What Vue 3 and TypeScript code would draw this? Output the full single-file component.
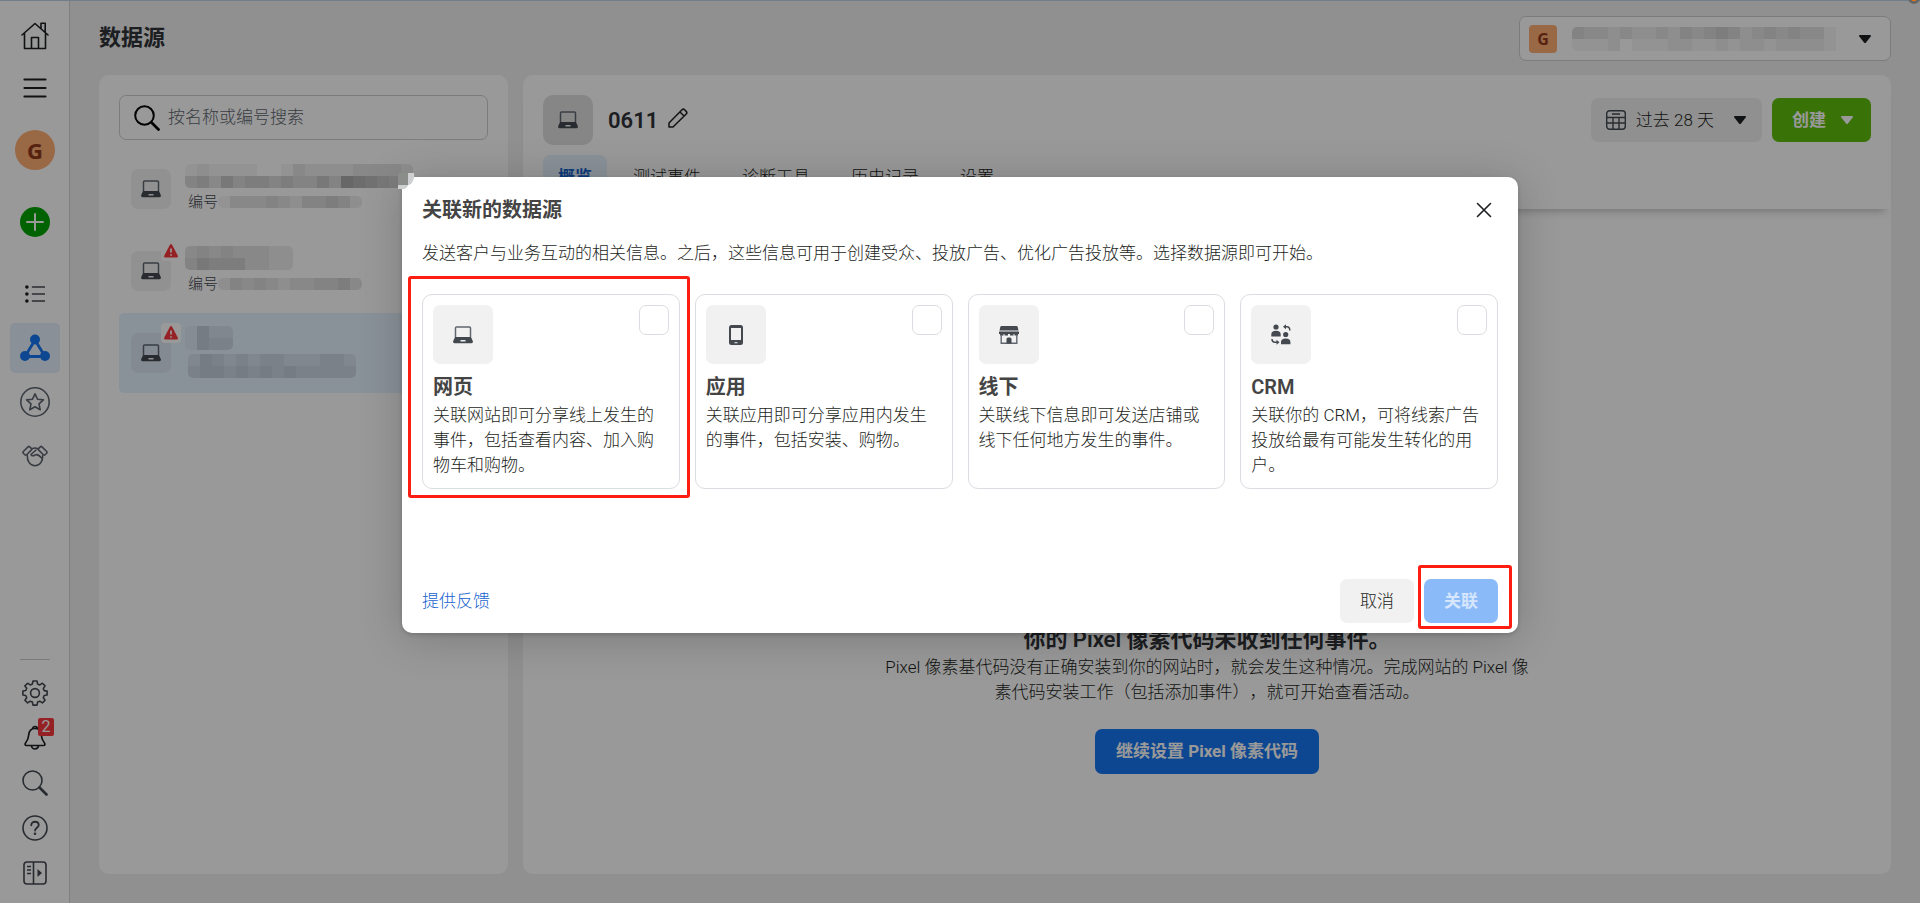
<script setup lang="ts">
import { ref } from 'vue'

interface Source { name: string[]; id: string[]; label: boolean; warn: boolean; active: boolean }
interface Card { key: string; title: string; text: string; icon: string; marked: boolean }

const sources: Source[] = [
  { name: ['1211110013222233332', '4536455454464987652'], id: ['133343244542'], label: true, warn: false, active: false },
  { name: ['343433322', '465553322'], id: ['243432334453'], label: true, warn: true, active: false },
  { name: ['1422', '1433'], id: ['24323233222332', '34434343433333'], label: false, warn: true, active: true },
]
const accountMask = ['4332322324345423434331', '1112011122112122122221']

const cards: Card[] = [
  { key: 'web', title: '网页', text: '关联网站即可分享线上发生的事件，包括查看内容、加入购物车和购物。', icon: 'laptop', marked: true },
  { key: 'app', title: '应用', text: '关联应用即可分享应用内发生的事件，包括安装、购物。', icon: 'phone', marked: false },
  { key: 'offline', title: '线下', text: '关联线下信息即可发送店铺或线下任何地方发生的事件。', icon: 'store', marked: false },
  { key: 'crm', title: 'CRM', text: '关联你的 CRM，可将线索广告投放给最有可能发生转化的用户。', icon: 'crm', marked: false },
]
const tabs = ['概览', '测试事件', '诊断工具', '历史记录', '设置']
const picked = ref<string[]>([])
const query = ref('')

const shade = (level: string) => ({ backgroundColor: `rgba(0, 0, 0, ${Number(level) * 0.036})` })
</script>

<template>
  <div class="app">
    <nav class="rail">
      <a href="#" class="rail-item" aria-label="主页">
        <svg width="28" height="28" viewBox="0 0 28 28" fill="none" stroke="#1c1e21" stroke-width="1.6" stroke-linejoin="round" stroke-linecap="round"><path d="M1 13 14 1.5 27 13M3.500 11v15.500h21V11M20 6V1.200h4.200V10M10.500 26.500V15.500h7v11" /></svg>
      </a>
      <button class="rail-item gap-2" aria-label="菜单">
        <svg width="24" height="20" viewBox="0 0 24 20" stroke="#1c1e21" stroke-width="2.200" stroke-linecap="round"><path d="M1.500 1.500h21M1.500 10h21M1.500 18.500h21" /></svg>
      </button>
      <button class="rail-item gap-12"><span class="avatar">G</span></button>
      <button class="rail-item gap-22" aria-label="新建">
        <svg width="30" height="30" viewBox="0 0 30 30"><circle cx="15" cy="15" r="15" fill="#00a400" /><path d="M15 7v16M7 15h16" stroke="#fff" stroke-width="2" stroke-linecap="round" /></svg>
      </button>
      <a href="#" class="rail-item gap-22" aria-label="列表">
        <svg width="20" height="20" viewBox="0 0 20 20" stroke="#444950" stroke-width="1.600" stroke-linecap="round"><path d="M7.500 3h12M7.500 10h12M7.500 17h12" /><g fill="#1c1e21" stroke="none"><circle cx="1.900" cy="3" r="1.800" /><circle cx="1.900" cy="10" r="1.800" /><circle cx="1.900" cy="17" r="1.800" /></g></svg>
      </a>
      <a href="#" class="rail-item gap-4 current" aria-label="数据源">
        <svg width="30" height="28" viewBox="0 0 30 28" fill="#1877f2"><path d="M15 6 5 22.500h20Z" fill="none" stroke="#1877f2" stroke-width="2.800" /><circle cx="15" cy="5.500" r="5" /><circle cx="5" cy="22" r="5" /><circle cx="25" cy="22" r="5" /></svg>
      </a>
      <a href="#" class="rail-item gap-4" aria-label="收藏">
        <svg width="30" height="30" viewBox="0 0 30 30" fill="none" stroke="#606770" stroke-width="1.600" stroke-linejoin="round"><circle cx="15" cy="15" r="14.200" /><path d="m15 6.800 2.500 5.400 5.900.7-4.400 4 1.200 5.900-5.200-3-5.200 3 1.200-5.900-4.400-4 5.900-.7Z" /></svg>
      </a>
      <a href="#" class="rail-item gap-4" aria-label="合作">
        <svg width="26" height="22" viewBox="0 0 26 22" fill="none" stroke="#606770" stroke-width="1.600" stroke-linejoin="round" stroke-linecap="round"><rect x="-4.500" y="-2.300" width="9" height="4.600" rx="1.200" transform="translate(5.300 5.800) rotate(-45)" /><rect x="-4.500" y="-2.300" width="9" height="4.600" rx="1.200" transform="translate(20.700 5.800) rotate(45)" /><path d="M10 3.800q3-1.500 6 0M5.300 10.500C5 16 8 20.500 13 20.800c5-.3 8-4.800 7.700-10.300M14 5 9 9.500c1 1.800 3 1.600 4.200.4 2.300-1.200 3.800.4 6.300 3" /></svg>
      </a>
      <div class="rail-bottom">
        <button class="tool" aria-label="设置">
          <svg width="26" height="26" viewBox="0 0 26 26" fill="none" stroke="#444950" stroke-width="1.600" stroke-linejoin="round"><circle cx="13" cy="13" r="4.400" /><path d="M11 1h4l.6 3 2.200.9L20.400 3.200l2.700 2.700-1.800 2.500.9 2.200 2.900.5v3.900l-2.900.5-.9 2.200 1.800 2.500-2.700 2.700-2.600-1.700-2.200.9-.6 3h-4l-.6-3-2.200-.9-2.600 1.700-2.700-2.700 1.800-2.500-.9-2.200L.9 15V11l2.900-.5.9-2.200L2.900 5.900l2.700-2.700 2.600 1.700 2.200-.9Z" /></svg>
        </button>
        <button class="tool" aria-label="通知">
          <svg width="24" height="25" viewBox="0 0 24 25" fill="none" stroke="#1c1e21" stroke-width="1.700" stroke-linejoin="round"><path d="M9.500 4a2.500 2.500 0 0 1 5 0M12 3.500c-4 0-6 2.700-6.300 6.500-.3 4-.7 5-3 7.700-1.200 1.500-.6 2.800.8 2.800h17c1.400 0 2-1.300.8-2.800-2.300-2.700-2.700-3.700-3-7.700C18 6.200 16 3.500 12 3.500ZM8.500 20.500a3.500 3.500 0 0 0 7 0" /></svg>
          <span class="count">2</span>
        </button>
        <button class="tool" aria-label="搜索">
          <svg width="26" height="26" viewBox="0 0 26 26" fill="none" stroke="#444950"><circle cx="10.500" cy="10.500" r="9.500" stroke-width="1.600" /><path d="m17.500 17.500 7 7" stroke-width="2.600" stroke-linecap="round" /></svg>
        </button>
        <button class="tool" aria-label="帮助">
          <svg width="26" height="26" viewBox="0 0 26 26" fill="none" stroke="#444950" stroke-width="1.600"><circle cx="13" cy="13" r="12" /><path d="M9.300 10.300c0-2.300 1.600-3.600 3.700-3.600s3.700 1.300 3.700 3.300c0 2.600-3.600 2.800-3.600 5.500" stroke-width="1.900" stroke-linecap="round" /><circle cx="13" cy="18.800" r="1.300" fill="#444950" stroke="none" /></svg>
        </button>
        <button class="tool" aria-label="展开">
          <svg width="24" height="24" viewBox="0 0 24 24" fill="none" stroke="#444950" stroke-width="1.600"><rect x="1" y="1" width="22" height="22" rx="3" /><path d="M10.500 1v22M4 5.500h4M4 9h4M4 12.500h4" /><path d="M14.500 8v8l4.500-4Z" fill="#444950" stroke="none" /></svg>
        </button>
      </div>
    </nav>

    <div class="page">
      <header class="top">
        <h1>数据源</h1>
        <button class="account" aria-label="选择帐户">
          <span class="badge-g">G</span>
          <span class="mask grow"><span v-for="(row, r) in accountMask" :key="r" class="mask-row"><i v-for="(c, n) in row" :key="n" :style="shade(c)"></i></span></span>
          <svg class="caret" width="12" height="8" viewBox="0 0 12 8"><path d="M1 0h10q1.500.3.700 1.500L7 7.400q-1 1-2 0L.3 1.500Q-.5.300 1 0Z" /></svg>
        </button>
      </header>

      <div class="columns">
        <aside class="panel list">
          <label class="search">
            <svg width="26" height="26" viewBox="0 0 26 26" fill="none" stroke="#050505"><circle cx="10.500" cy="10.500" r="9.300" stroke-width="2" /><path d="m17.500 17.500 7 7" stroke-width="2.800" stroke-linecap="round" /></svg>
            <input v-model="query" type="text" placeholder="按名称或编号搜索" aria-label="按名称或编号搜索" />
          </label>
          <a v-for="(s, i) in sources" :key="i" href="#" class="source" :class="{ active: s.active }">
            <span class="thumb">
              <svg width="20" height="18" viewBox="0 0 20 18"><path d="M2.500 11V2q0-1 1-1h13q1 0 1 1v9" fill="none" stroke="#606770" stroke-width="1.500" /><path d="M2 11h16l2 4.500q0 1.800-1.500 1.800h-17Q0 17.300 0 15.500Z" fill="#444950" /><path d="M7.500 14h5v1.500h-5Z" fill="#eee" /></svg>
              <span v-if="s.warn" class="warn"><svg width="14" height="14" viewBox="0 0 14 14"><path d="M5.800 1q1.200-1.800 2.400 0l5.500 10.500q.8 2-1 2H1.300q-1.800 0-1-2Z" fill="#fa383e" /><path d="M7 4.500v4M7 10.200v1.600" stroke="#fff" stroke-width="1.700" /></svg></span>
            </span>
            <span class="source-text">
              <span class="mask"><span v-for="(row, r) in s.name" :key="r" class="mask-row"><i v-for="(c, n) in row" :key="n" :style="shade(c)"></i></span></span>
              <span class="sub"><template v-if="s.label">编号</template><span class="mask"><span v-for="(row, r) in s.id" :key="r" class="mask-row"><i v-for="(c, n) in row" :key="n" :style="shade(c)"></i></span></span></span>
            </span>
          </a>
        </aside>

        <main class="panel detail">
          <div class="detail-head">
            <div class="detail-row">
              <span class="big-thumb"><svg width="20" height="18" viewBox="0 0 20 18"><path d="M2.500 11V2q0-1 1-1h13q1 0 1 1v9" fill="none" stroke="#606770" stroke-width="1.500" /><path d="M2 11h16l2 4.500q0 1.800-1.500 1.800h-17Q0 17.300 0 15.500Z" fill="#444950" /><path d="M7.500 14h5v1.500h-5Z" fill="#eee" /></svg></span>
              <h2>0611</h2>
              <button class="edit" aria-label="编辑名称"><svg width="20" height="20" viewBox="0 0 20 20" fill="none" stroke="#1c1e21" stroke-width="1.500" stroke-linejoin="round"><path d="M1 19v-4L14 1.800q1.300-1.300 2.600 0l1.600 1.600q1.300 1.300 0 2.600L5 19ZM12 4l4 4" /></svg></button>
              <button class="range">
                <svg width="20" height="20" viewBox="0 0 20 20" fill="none" stroke="#444950" stroke-width="1.400"><rect x=".7" y=".7" width="18.600" height="18.600" rx="3" /><path d="M.7 7.500h18.600M.7 13h18.600M7 7.500v12M13 7.500v12M6 4h8" /></svg>
                <span>过去 28 天</span>
                <svg class="caret" width="12" height="8" viewBox="0 0 12 8"><path d="M1 0h10q1.500.3.700 1.500L7 7.400q-1 1-2 0L.3 1.500Q-.5.300 1 0Z" /></svg>
              </button>
              <button class="create">创建
                <svg width="12" height="8" viewBox="0 0 12 8" fill="#fff"><path d="M1 0h10q1.500.3.700 1.500L7 7.400q-1 1-2 0L.3 1.500Q-.5.300 1 0Z" /></svg>
              </button>
            </div>
            <div class="tabs">
              <button v-for="(t, i) in tabs" :key="t" :class="{ on: i === 0 }">{{ t }}</button>
            </div>
          </div>
          <section class="empty">
            <h3>你的 Pixel 像素代码未收到任何事件。</h3>
            <p>Pixel 像素基代码没有正确安装到你的网站时，就会发生这种情况。完成网站的 Pixel 像素代码安装工作（包括添加事件），就可开始查看活动。</p>
            <button class="primary">继续设置 Pixel 像素代码</button>
          </section>
        </main>
      </div>
    </div>

    <div class="overlay">
      <div class="modal" role="dialog" aria-labelledby="modal-title">
        <svg class="corner" width="18" height="16" viewBox="0 0 18 16"><path d="M0 0h10v12H0Z" fill="#8b8d8b" /><path d="M10 0h6q1 4-1 8t-5 4ZM0 12h10q-1 4-5 4H0Z" fill="#cecfd0" /></svg>
        <header class="modal-head">
          <h2 id="modal-title">关联新的数据源</h2>
          <button class="close" aria-label="关闭"><svg width="16" height="16" viewBox="0 0 16 16" stroke="#1c1e21" stroke-width="1.600" stroke-linecap="round"><path d="m1.500 1.500 13 13M14.500 1.500l-13 13" /></svg></button>
        </header>
        <p class="intro">发送客户与业务互动的相关信息。之后，这些信息可用于创建受众、投放广告、优化广告投放等。选择数据源即可开始。</p>
        <div class="cards">
          <label v-for="c in cards" :key="c.key" class="card">
            <span class="card-top">
              <span class="card-icon">
                <svg v-if="c.icon === 'laptop'" width="20" height="18" viewBox="0 0 20 18"><path d="M2.500 11V2q0-1 1-1h13q1 0 1 1v9" fill="none" stroke="#606770" stroke-width="1.500" /><path d="M2 11h16l2 4.500q0 1.800-1.500 1.800h-17Q0 17.300 0 15.500Z" fill="#444950" /><path d="M7.500 14h5v1.500h-5Z" fill="#eee" /></svg>
                <svg v-else-if="c.icon === 'phone'" width="14" height="20" viewBox="0 0 14 20"><rect width="14" height="20" rx="2.500" fill="#444950" /><path d="M2 3h10v12H2Z" fill="#f1f1f1" /><path d="M5.500 17h3v1.300h-3Z" fill="#ccc" /></svg>
                <svg v-else-if="c.icon === 'store'" width="20" height="20" viewBox="0 0 20 20" fill="#444950"><path d="M2.500 1h15q1 0 1.200 1L19.500 5.500H.5L1.300 2q.2-1 1.200-1ZM0 6.500h20V9H0Z" /><path d="M1 9h3.500v1.500H1ZM5.500 9H9v1.500H5.500ZM11 9h3.500v1.500H11ZM15.500 9H19v1.500h-3.500Z" /><path d="M2.200 9.500V18.300h15.600V9.500" fill="none" stroke="#606770" stroke-width="1.400" /><path d="M7.500 18.500v-4.500q0-1.500 1.500-1.500h2q1.500 0 1.500 1.500v4.500Z" /></svg>
                <svg v-else width="20" height="21" viewBox="0 0 20 21" fill="#444950"><circle cx="5" cy="3" r="2.600" /><path d="M.3 12.500v-2Q.3 6.800 5 6.800t4.700 3.700v2Z" /><circle cx="14.700" cy="10.500" r="2.600" /><path d="M10 20.300v-2q0-3.700 4.700-3.700t4.700 3.700v2Z" /><path d="M13.500 2.700H16q2.800 0 2.800 3.800M7 18.300H4Q1 18.300 1 15" fill="none" stroke="#444950" stroke-width="1.500" /><path d="m12 2.700 3-2.500v5ZM8.500 18.300l-3-2.500v5Z" /></svg>
              </span>
              <input v-model="picked" type="checkbox" :value="c.key" :aria-label="c.title" />
            </span>
            <strong>{{ c.title }}</strong>
            <span class="card-text">{{ c.text }}</span>
            <span v-if="c.marked" class="mark mark-card"></span>
          </label>
        </div>
        <footer class="modal-foot">
          <a href="#">提供反馈</a>
          <button class="cancel">取消</button>
          <span class="confirm-wrap">
            <button class="confirm" disabled>关联</button>
            <span class="mark mark-button"></span>
          </span>
        </footer>
      </div>
    </div>
    <span class="status-dot"></span>
  </div>
</template>

<style>
body {
  margin: 0;
  background: #fff;
}
</style>

<style scoped>
* {
  box-sizing: border-box;
}
h1, h2, h3, p {
  margin: 0;
}
svg {
  display: block;
  flex: none;
}
button {
  font: inherit;
  color: inherit;
  border: 0;
  padding: 0;
  background: none;
  cursor: pointer;
}
.app {
  position: relative;
  display: flex;
  height: calc(100vh - 1px);
  padding-top: 1px;
  overflow: hidden;
  background: #b9d3e2;
  font-family: Roboto, "Noto Sans CJK SC", sans-serif;
  font-size: 17px;
  font-weight: 300;
  line-height: 25px;
  text-spacing-trim: space-all;
  color: #1c1e21;
}
.rail {
  flex: none;
  width: 70px;
  padding: 10px 9px 8px 10px;
  display: flex;
  flex-direction: column;
  align-items: center;
  background: #fff;
  border-right: 1px solid #d5d5d5;
}
.rail-item {
  flex: none;
  width: 50px;
  height: 50px;
  display: flex;
  align-items: center;
  justify-content: center;
  border-radius: 5px;
}
.gap-2 { margin-top: 2px; }
.gap-4 { margin-top: 4px; }
.gap-12 { margin-top: 12px; }
.gap-22 { margin-top: 22px; }
.current {
  background: #e7f0fd;
}
.avatar {
  width: 40px;
  height: 40px;
  border-radius: 50%;
  background: #ffad73;
  color: #8f3a1c;
  font-family: "Open Sans", sans-serif;
  font-size: 22px;
  font-weight: 700;
  line-height: 40px;
}
.rail-bottom {
  margin-top: auto;
  border-top: 1px solid #ccc;
  padding-top: 10px;
  width: 30px;
  display: flex;
  flex-direction: column;
  align-items: center;
}
.tool {
  position: relative;
  width: 30px;
  height: 45px;
  display: flex;
  align-items: center;
  justify-content: center;
}
.count {
  position: absolute;
  top: 3px;
  left: 18px;
  width: 16px;
  height: 18px;
  border-radius: 2px;
  background: #fa383e;
  color: #fff;
  font-size: 16px;
  font-weight: 400;
  line-height: 18px;
}
.page {
  flex: 1;
  min-width: 0;
  padding: 0 29px 29px;
  display: flex;
  flex-direction: column;
  background: #f1f1f1;
}
.top {
  height: 74px;
  padding: 15px 0 14px;
  display: flex;
  justify-content: space-between;
}
h1 {
  font-size: 22px;
  font-weight: 700;
  line-height: 44px;
  color: #303338;
}
.account {
  width: 372px;
  height: 45px;
  padding: 0 19px 0 9px;
  display: flex;
  align-items: center;
  gap: 15px;
  background: #fff;
  border: 1px solid #ccd0d5;
  border-radius: 7px;
}
.badge-g {
  width: 28px;
  height: 28px;
  border-radius: 4px;
  background: #ffad73;
  color: #8f3a1c;
  font-family: "Open Sans", sans-serif;
  font-size: 16px;
  font-weight: 700;
  line-height: 28px;
}
.mask {
  display: flex;
  flex-direction: column;
  border-radius: 5px;
  overflow: hidden;
}
.grow {
  flex: 1;
}
.mask-row {
  display: flex;
}
.mask-row i {
  width: 12px;
  height: 12px;
}
.caret {
  fill: #1c1e21;
}
.columns {
  flex: 1;
  min-height: 0;
  display: flex;
  gap: 15px;
}
.panel {
  background: #fff;
  border-radius: 10px;
}
.list {
  flex: none;
  width: 409px;
  padding: 20px;
  display: flex;
  flex-direction: column;
  gap: 2px;
}
.search {
  height: 45px;
  margin-bottom: 7px;
  padding: 0 14px;
  display: flex;
  align-items: center;
  gap: 8px;
  border: 1px solid #ccd0d5;
  border-radius: 7px;
}
.search input {
  flex: 1;
  min-width: 0;
  border: 0;
  outline: 0;
  padding: 0;
  background: none;
  font: inherit;
}
.search input::placeholder {
  color: #606770;
  opacity: 1;
}
.source {
  height: 80px;
  padding: 0 12px;
  display: flex;
  align-items: center;
  gap: 14px;
  border-radius: 5px;
  color: #444950;
  text-decoration: none;
}
.source.active {
  background: #e7f3ff;
}
.thumb {
  position: relative;
  flex: none;
  width: 40px;
  height: 40px;
  display: flex;
  align-items: center;
  justify-content: center;
  border-radius: 7px;
  background: rgba(0, 0, 0, .05);
}
.warn {
  position: absolute;
  top: -10px;
  right: -10px;
  width: 20px;
  height: 20px;
  display: flex;
  align-items: center;
  justify-content: center;
  border-radius: 4px;
  background: #fff;
}
.source-text {
  padding-bottom: 2px;
  display: flex;
  flex-direction: column;
  align-items: flex-start;
  gap: 4px;
}
.sub {
  padding-left: 3px;
  display: flex;
  align-items: center;
  font-size: 15px;
  line-height: 20px;
}
.detail {
  flex: 1;
  min-width: 0;
  display: flex;
  flex-direction: column;
}
.detail-head {
  padding: 20px 20px 10px;
  border-radius: 10px 10px 0 0;
  box-shadow: 0 8px 8px -6px rgba(0, 0, 0, .25);
}
.detail-row {
  display: flex;
  align-items: center;
}
.big-thumb {
  width: 50px;
  height: 50px;
  margin-right: 15px;
  display: flex;
  align-items: center;
  justify-content: center;
  border-radius: 10px;
  background: #e0e0e0;
}
.detail-row h2 {
  font-size: 22px;
  font-weight: 600;
  color: #303338;
}
.edit {
  margin: 0 auto 4px 10px;
}
.range, .create {
  height: 44px;
  display: flex;
  align-items: center;
  border-radius: 7px;
}
.range {
  padding: 0 16px 0 15px;
  gap: 10px;
  background: #f1f1f1;
}
.range .caret {
  margin-left: 10px;
}
.create {
  margin-left: 10px;
  padding: 0 18px 0 20px;
  gap: 15px;
  background: #60bf0c;
  color: #fff;
  font-weight: 700;
}
.tabs {
  margin-top: 10px;
  display: flex;
  gap: 11px;
}
.tabs button {
  height: 44px;
  padding: 0 15px;
  border-radius: 7px;
}
.tabs .on {
  background: #e7f3ff;
  color: #1763cf;
  font-weight: 700;
}
.empty {
  margin: auto auto 100px;
  display: flex;
  flex-direction: column;
  align-items: center;
  text-align: center;
}
.empty h3 {
  font-size: 22px;
  font-weight: 600;
  line-height: 30px;
  color: #303338;
}
.empty p {
  max-width: 660px;
}
.primary {
  height: 45px;
  margin-top: 24px;
  padding: 0 21px;
  border-radius: 7px;
  background: #1877f2;
  color: #fff;
  font-weight: 700;
}
.status-dot {
  position: absolute;
  top: -8px;
  right: 0;
  width: 12px;
  height: 12px;
  border-radius: 50%;
  border: 3px solid #666;
  background: #f70;
}
.overlay {
  position: absolute;
  inset: 0;
  padding-top: 177px;
  display: flex;
  align-items: flex-start;
  justify-content: center;
  background: rgba(0, 0, 0, .4);
}
.modal {
  position: relative;
  width: 1116px;
  padding: 20px 20px 10px;
  border-radius: 10px;
  background: #fff;
  box-shadow: 0 5px 45px rgba(0, 0, 0, .2), 0 2px 4px rgba(0, 0, 0, .15);
}
.corner {
  position: absolute;
  top: -4px;
  left: -4px;
}
.modal-head {
  display: flex;
  align-items: center;
  justify-content: space-between;
}
.modal-head h2 {
  font-size: 20px;
  font-weight: 700;
  line-height: 26px;
  color: #444;
}
.close {
  margin-right: 6px;
}
.intro {
  margin-top: 18px;
}
.cards {
  margin-top: 28px;
  display: grid;
  grid-template-columns: repeat(4, 1fr);
  gap: 15px;
}
.card {
  position: relative;
  min-height: 195px;
  padding: 10px;
  display: flex;
  flex-direction: column;
  border: 1px solid #dadde1;
  border-radius: 10px;
}
.card-top {
  display: flex;
  justify-content: space-between;
  align-items: flex-start;
}
.card-icon {
  width: 60px;
  height: 59px;
  display: flex;
  align-items: center;
  justify-content: center;
  border-radius: 7px;
  background: #f1f1f1;
}
.card input {
  appearance: none;
  width: 30px;
  height: 30px;
  margin: 0;
  border: 1px solid #dadde1;
  border-radius: 7px;
  background: #fff;
}
.card input:checked {
  background: #1877f2;
}
.card strong {
  margin-top: 10px;
  font-size: 20px;
  font-weight: 600;
  line-height: 26px;
  color: #444;
}
.card-text {
  margin-top: 3px;
}
.mark {
  position: absolute;
  border: 3px solid #ff1d12;
  border-radius: 3px;
  pointer-events: none;
}
.mark-card {
  inset: -19px -11px -10px -15px;
}
.modal-foot {
  margin-top: 90px;
  display: flex;
  align-items: center;
  gap: 10px;
}
.modal-foot a {
  margin-right: auto;
  color: #1763cf;
  text-decoration: none;
}
.cancel, .confirm {
  height: 44px;
  padding: 0 20px;
  border-radius: 7px;
  background: #f1f1f1;
}
.confirm {
  background: #8bbaf8;
  color: #d5e6fd;
  font-weight: 700;
}
.confirm-wrap {
  position: relative;
}
.mark-button {
  inset: -14px -14px -6px -6px;
}
</style>
